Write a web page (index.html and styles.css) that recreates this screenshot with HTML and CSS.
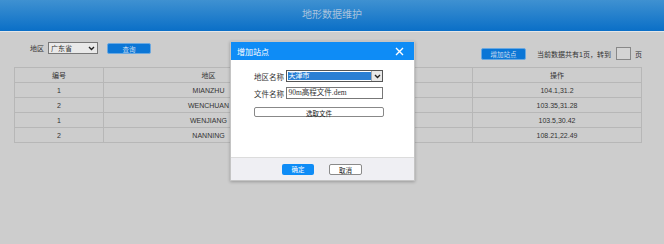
FILE: index.html
```html
<!DOCTYPE html>
<html>
<head>
    <title>地形数据维护</title>
    <link rel="stylesheet" href="styles.css">
</head>
<body>
    <div class="header">地形数据维护</div>

    <div class="toolbar">
        <div class="tool-left">
            <span class="tool-label">地区</span>
            <div class="fake-select">
                <span>广东省</span>
                <svg width="7" height="5" viewBox="0 0 7 5"><path d="M1 1 L3.5 3.5 L6 1" stroke="#222" stroke-width="1.4" fill="none"/></svg>
            </div>
            <button class="btn btn-blue btn-query">查询</button>
        </div>
        <div class="tool-right">
            <button class="btn btn-blue btn-add">增加站点</button>
            <span class="page-info">当前数据共有1页，转到</span>
            <input class="page-input" type="text">
            <span class="page-info">页</span>
        </div>
    </div>

    <table class="data-table">
        <colgroup>
            <col style="width: 89px">
            <col style="width: 210px">
            <col style="width: 159px">
            <col style="width: 169px">
        </colgroup>
        <thead>
            <tr><th>编号</th><th>地区</th><th>文件</th><th>操作</th></tr>
        </thead>
        <tbody>
            <tr><td>1</td><td>MIANZHU</td><td>dem</td><td>104.1,31.2</td></tr>
            <tr><td>2</td><td>WENCHUAN</td><td>dem</td><td>103.35,31.28</td></tr>
            <tr><td>1</td><td>WENJIANG</td><td>dem</td><td>103.5,30.42</td></tr>
            <tr><td>2</td><td>NANNING</td><td>dem</td><td>108.21,22.49</td></tr>
        </tbody>
    </table>

    <div class="modal">
        <div class="modal-title">
            <span>增加站点</span>
            <span class="close">
                <svg width="9" height="9" viewBox="0 0 9 9"><path d="M1 1 L8 8 M8 1 L1 8" stroke="#fff" stroke-width="1.4"/></svg>
            </span>
        </div>
        <div class="modal-body">
            <div class="form-row">
                <span class="form-label">地区名称</span>
                <div class="fake-select modal-select">
                    <span class="picked">天津市</span>
                    <span class="arrow-box">
                        <svg width="7" height="5" viewBox="0 0 7 5"><path d="M1 1 L3.5 3.5 L6 1" stroke="#222" stroke-width="1.4" fill="none"/></svg>
                    </span>
                </div>
            </div>
            <div class="form-row">
                <span class="form-label">文件名称</span>
                <div class="text-box">90m高程文件.dem</div>
            </div>
            <button class="btn btn-file">选取文件</button>
        </div>
        <div class="modal-footer">
            <button class="btn btn-ok">确定</button>
            <button class="btn btn-cancel">取消</button>
        </div>
    </div>
</body>
</html>
```

FILE: styles.css
```css
body {
    margin: 0;
    padding: 0;
    font-family: "Liberation Sans", "Noto Sans CJK SC", sans-serif;
    font-size: 7px;
    color: #333;
    background: #cdcdcd;
    width: 664px;
    height: 244px;
    overflow: hidden;
    position: relative;
}

.header {
    height: 31px;
    line-height: 30px;
    text-align: center;
    font-size: 10px;
    color: #a9c3dd;
    background: linear-gradient(#3f91d1, #0a6fc7);
    border-bottom: 1px solid #e6e6e6;
}

.toolbar {
    display: flex;
    justify-content: space-between;
    padding: 0 22px 0 30px;
    height: 35px;
}

.tool-left {
    display: flex;
    align-items: center;
    height: 12px;
    margin-top: 10px;
}

.tool-label {
    margin-right: 4px;
}

.fake-select {
    display: flex;
    align-items: center;
    justify-content: space-between;
    width: 44px;
    height: 10px;
    border: 1px solid #777;
    background: #e9e9e9;
    padding: 0 2px 0 2px;
    box-sizing: content-box;
    font-size: 7px;
}

.btn {
    font-family: inherit;
    font-size: 6.5px;
    border: none;
    padding: 0;
    border-radius: 2px;
    cursor: pointer;
}

.btn-blue {
    background: #0b76d6;
    color: #c9ddf1;
    border: 1px solid #6aa8e0;
}

.btn-query {
    width: 44px;
    height: 11px;
    margin-left: 9px;
}

.tool-right {
    display: flex;
    align-items: center;
    height: 13px;
    margin-top: 15px;
}

.btn-add {
    width: 45px;
    height: 12px;
    margin-right: 11px;
}

.page-info {
    font-size: 7px;
}

.page-input {
    width: 13px;
    height: 11px;
    margin: 0 4px 0 5px;
    padding: 0;
    border: 1px solid #888;
    background: #d4d4d4;
}

.data-table {
    margin-left: 14px;
    width: 627px;
    border-collapse: collapse;
    table-layout: fixed;
}

.data-table th,
.data-table td {
    height: 14px;
    padding: 0;
    border: 1px solid #b7b7b7;
    text-align: center;
    font-weight: normal;
    font-size: 7px;
    color: #333;
}

.modal {
    position: absolute;
    left: 230px;
    top: 41px;
    width: 183px;
    height: 138px;
    background: #fff;
    border: 1px solid #c4c4c4;
    box-shadow: 0 1px 3px rgba(0, 0, 0, 0.25);
    display: flex;
    flex-direction: column;
}

.modal-title {
    height: 18px;
    background: #0e8cf6;
    color: #fff;
    font-size: 8px;
    display: flex;
    align-items: center;
    justify-content: space-between;
    padding: 0 10px 0 6px;
}

.close {
    display: flex;
}

.modal-body {
    flex: 1;
    padding: 10px 31px 0 23px;
}

.form-row {
    display: flex;
    align-items: center;
    margin-bottom: 5px;
}

.form-label {
    width: 32px;
    font-size: 7.5px;
}

.modal-select {
    width: 96px;
    height: 10px;
    padding: 0 0 0 1px;
    border: 1px solid #555;
    background: #fff;
}

.picked {
    background: #2a7fd4;
    color: #fff;
    flex: 1;
    height: 8px;
    line-height: 8px;
    font-size: 7px;
    padding-left: 1px;
}

.arrow-box {
    width: 10px;
    height: 10px;
    display: flex;
    align-items: center;
    justify-content: center;
    background: #e8e8e8;
    border-left: 1px solid #aaa;
}

.text-box {
    width: 95px;
    height: 10px;
    line-height: 10px;
    border: 1px solid #777;
    padding-left: 2px;
    font-family: "Liberation Serif", "Noto Sans CJK SC", serif;
    font-size: 7.5px;
}

.btn-file {
    display: block;
    width: 130px;
    height: 10px;
    margin-top: 8px;
    background: #fff;
    border: 1px solid #888;
    border-radius: 2px;
    color: #222;
}

.modal-footer {
    height: 22px;
    background: #efeff3;
    border-top: 1px solid #dcdcdc;
    display: flex;
    align-items: center;
    padding-left: 51px;
    gap: 15px;
}

.btn-ok {
    width: 32px;
    height: 11px;
    background: #0e8cf6;
    color: #fff;
}

.btn-cancel {
    width: 33px;
    height: 11px;
    background: #fff;
    border: 1px solid #8a8a8a;
    color: #222;
}
```
